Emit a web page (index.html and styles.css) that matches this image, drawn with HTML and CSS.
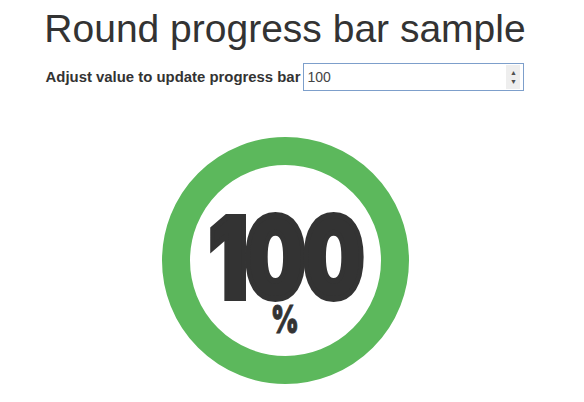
FILE: index.html
```html
<!DOCTYPE html>
<html lang="en">
<head>
  <meta charset="UTF-8">
  <title>Round progress bar sample</title>
  <meta name="viewport" content="width=device-width, initial-scale=1.0">
  <link rel="stylesheet" href="styles.css">
</head>
<body>
  <div class="page">
    <h1>Round progress bar sample</h1>

    <!-- Value control -->
    <div class="control">
      <label for="progressValue">Adjust value to update progress bar</label>
      <div class="field">
        <input type="text" id="progressValue" value="100" autofocus>
        <span class="spinner">
          <span class="arrow">&#9650;</span>
          <span class="arrow">&#9660;</span>
        </span>
      </div>
    </div>

    <!-- Round progress bar -->
    <div class="round-progress">
      <svg class="ring" width="247" height="247" viewBox="0 0 247 247">
        <circle cx="123.5" cy="123.5" r="109.5" fill="#fff" stroke="#5cb85c" stroke-width="28"/>
      </svg>
      <div class="value">
        <span class="number">100</span>
        <span class="percent">%</span>
      </div>
    </div>
  </div>
</body>
</html>
```

FILE: styles.css
```css
* {
  box-sizing: border-box;
}

body {
  margin: 0;
  background: #fff;
  color: #333;
  font-family: "Liberation Sans", Arial, sans-serif;
}

.page {
  width: 570px;
  display: flex;
  flex-direction: column;
  align-items: center;
}

h1 {
  margin: 6px 0 0;
  font-size: 39px;
  font-weight: normal;
  line-height: 46px;
}

.control {
  display: flex;
  align-items: center;
  margin-top: 11px;
}

.control label {
  font-size: 14.9px;
  font-weight: bold;
  margin-right: 3px;
}

.field {
  display: flex;
  align-items: center;
  width: 221px;
  height: 28px;
  border: 1px solid #7d9fcb;
  background: #fff;
}

.field input {
  flex: 1;
  min-width: 0;
  border: none;
  outline: none;
  padding: 0 3px;
  font-family: "Liberation Sans", Arial, sans-serif;
  font-size: 14px;
  color: #444;
  background: transparent;
}

.spinner {
  display: flex;
  flex-direction: column;
  justify-content: center;
  gap: 2px;
  width: 14px;
  height: 24px;
  margin-right: 3px;
  background: #eee;
}

.arrow {
  font-size: 7px;
  line-height: 7px;
  text-align: center;
  color: #505050;
}

.round-progress {
  position: relative;
  width: 247px;
  height: 247px;
  margin-top: 46px;
}

.ring {
  display: block;
}

.value {
  position: absolute;
  left: 0;
  right: 0;
  top: 75px;
  display: flex;
  flex-direction: column;
  align-items: center;
}

.number {
  font-family: Inter, "Liberation Sans", sans-serif;
  font-weight: 900;
  font-size: 112px;
  line-height: 90px;
  letter-spacing: -4px;
  transform: scaleX(0.77);
  -webkit-text-stroke: 6px #333;
}

.percent {
  margin-top: 1px;
  font-family: Inter, "Liberation Sans", sans-serif;
  font-weight: 900;
  font-size: 38px;
  line-height: 32px;
  transform: scaleX(0.7);
  -webkit-text-stroke: 1px #333;
}
```
